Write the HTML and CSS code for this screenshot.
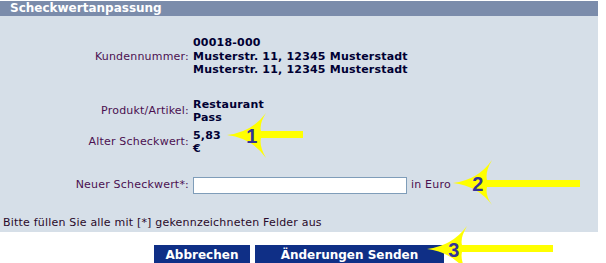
FILE: index.html
```html
<!DOCTYPE html>
<html>
<head>
<meta charset="UTF-8">
<link rel="stylesheet" href="styles.css">
</head>
<body>
<div class="page">
  <div class="box">
    <div class="box_head">Scheckwertanpassung</div>
    <div class="box_body">
      <div class="row row_kunde">
        <div class="lbl">Kundennummer:</div>
        <div class="val">00018-000<br>Musterstr. 11, 12345 Musterstadt<br>Musterstr. 11, 12345 Musterstadt</div>
      </div>
      <div class="row row_produkt">
        <div class="lbl">Produkt/Artikel:</div>
        <div class="val">Restaurant<br>Pass</div>
      </div>
      <div class="row row_alt">
        <div class="lbl">Alter Scheckwert:</div>
        <div class="val">5,83<br>&euro;</div>
      </div>
      <div class="row row_neu">
        <div class="lbl">Neuer Scheckwert*:</div>
        <div class="val_input"><input type="text" class="txt_wert"> <span class="unit">in Euro</span></div>
      </div>
      <p class="hint">Bitte füllen Sie alle mit [*] gekennzeichneten Felder aus</p>
    </div>
  </div>
  <div class="buttons">
    <button class="btn btn_cancel">Abbrechen</button>
    <button class="btn btn_send">Änderungen Senden</button>
  </div>

  <!-- hinweis-pfeile -->
  <svg class="arrows" width="606" height="263" viewBox="0 0 606 263">
    <path class="arrow" d="M227,135 Q252,132 266,113 Q259,124 261,131 L303,131 L303,138 L261,138 Q259,146 266,158 Q252,138 227,135 Z"/>
    <text class="num" x="252" y="143">1</text>
    <path class="arrow" d="M453,183 Q478,180 492,160 Q485,172 487,180 L580,180 L580,187 L487,187 Q485,195 492,205 Q478,186 453,183 Z"/>
    <text class="num" x="478" y="191">2</text>
    <path class="arrow" d="M427,249 Q452,246 467,226 Q460,238 462,245 L553,245 L553,252 L462,252 Q460,261 467,272 Q452,252 427,249 Z"/>
    <text class="num" x="454" y="257">3</text>
  </svg>
</div>
</body>
</html>
```
FILE: styles.css
```css
body {
  margin: 0;
  background-color: #fff;
  font-family: "DejaVu Sans", Verdana, sans-serif;
  font-size: 11px;
  letter-spacing: 0.2px;
}

.page {
  position: relative;
  width: 606px;
  height: 263px;
  overflow: hidden;
}

.box {
  width: 598px;
  margin-top: 1px;
}

.box_head {
  height: 15px;
  line-height: 15px;
  padding-left: 10px;
  background-color: #7b8cab;
  color: #fff;
  font-size: 12px;
  font-weight: bold;
  letter-spacing: 0;
}

.box_body {
  background-color: #d6dfe8;
  padding: 20px 0 3px 0;
}

.row {
  display: grid;
  grid-template-columns: 189px 1fr;
  column-gap: 4px;
  align-items: center;
  line-height: 13.5px;
}

.row_produkt { margin-top: 21px; }
.row_alt { margin-top: 4px; }
.row_neu { margin-top: 21px; }

.lbl {
  text-align: right;
  color: #4b1050;
}

.val {
  font-weight: bold;
  color: #000033;
}

.val_input {
  display: flex;
  align-items: center;
  gap: 4px;
}

.txt_wert {
  box-sizing: border-box;
  width: 214px;
  height: 17px;
  margin: 0;
  border: 1px solid #7f9db9;
  background-color: #fff;
}

.unit {
  color: #4b1050;
}

.hint {
  margin: 22px 0 0 3px;
  line-height: 13px;
  color: #2a0a2a;
}

.buttons {
  display: flex;
  justify-content: center;
  gap: 5px;
  width: 598px;
  margin-top: 13px;
}

.btn {
  height: 20px;
  border: 0;
  padding: 0;
  background-color: #0f2f86;
  color: #fff;
  font-family: "DejaVu Sans", Verdana, sans-serif;
  font-size: 12px;
  font-weight: bold;
}

.btn_cancel { width: 96px; }
.btn_send { width: 189px; }

.arrows {
  position: absolute;
  left: 0;
  top: 0;
  pointer-events: none;
}

.arrow {
  fill: #ffff00;
}

.num {
  fill: #333399;
  font-family: "Liberation Sans", Arial, sans-serif;
  font-size: 20px;
  font-weight: bold;
  text-anchor: middle;
}
```
